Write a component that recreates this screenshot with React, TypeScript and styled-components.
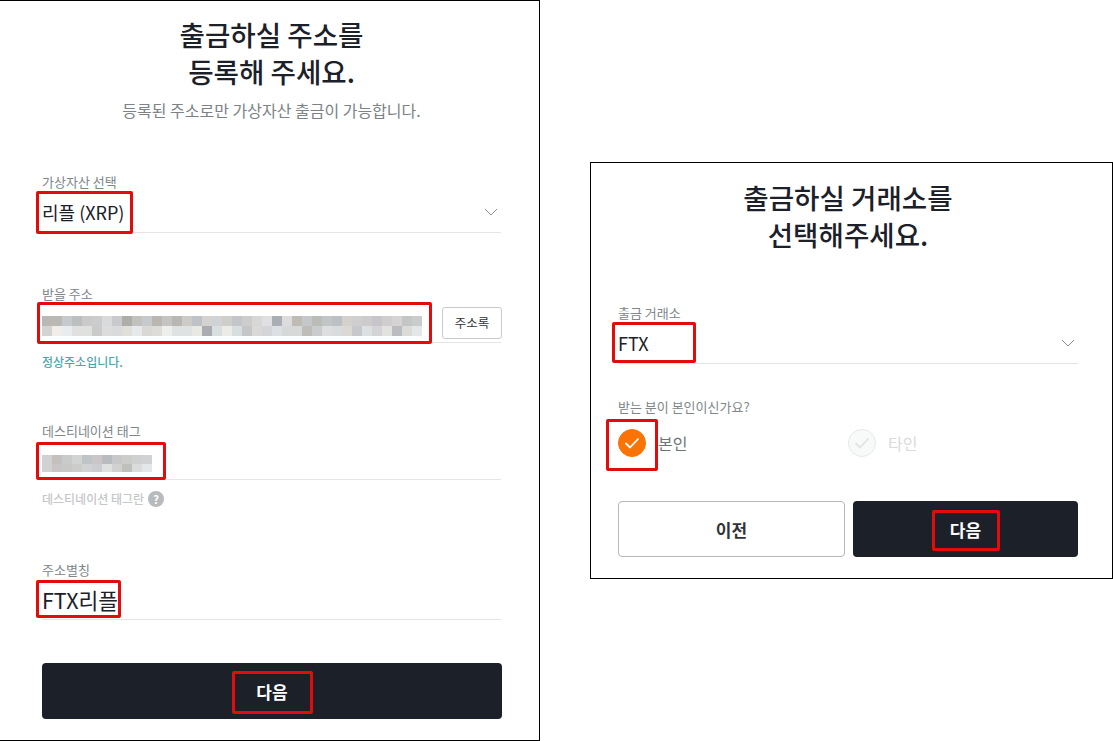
import React from 'react';
import styled, { createGlobalStyle } from 'styled-components';

const GlobalStyle = createGlobalStyle`
  html, body {
    margin: 0;
    padding: 0;
    background: #fff;
  }

  body {
    font-family: 'Noto Sans CJK KR', 'Noto Sans', sans-serif;
    color: #1b2029;
  }

  * {
    box-sizing: border-box;
  }
`;

const Page = styled.div`
  display: flex;
  align-items: flex-start;
  width: 1113px;
  height: 741px;
  overflow: hidden;
`;

const LeftPanel = styled.section`
  width: 540px;
  height: 741px;
  padding: 15px 38px 0 42px;
  border: 1px solid #000;
  border-left-width: 0;
  display: flex;
  flex-direction: column;
`;

const RightPanel = styled.section`
  width: 523px;
  height: 417px;
  margin: 162px 0 0 50px;
  padding: 16px 34px 0 27px;
  border: 1px solid #000;
  display: flex;
  flex-direction: column;
`;

const Title = styled.h1`
  margin: 0;
  font-size: 27.6px;
  line-height: 37px;
  font-weight: 500;
  text-align: center;
  color: #1b2029;
`;

const Subtitle = styled.p`
  margin: 8px 0 0;
  height: 24px;
  font-size: 16px;
  line-height: 24px;
  color: #7c8286;
  text-align: center;
`;

const Field = styled.div<{ $top: number }>`
  position: relative;
  margin-top: ${(p) => p.$top}px;
`;

const Label = styled.label`
  display: block;
  height: 18px;
  font-size: 13px;
  line-height: 18px;
  color: #80868a;
`;

const ValueRow = styled.div<{ $height?: number }>`
  display: flex;
  align-items: center;
  justify-content: space-between;
  height: ${(p) => p.$height ?? 42}px;
  padding-right: 3px;
  border-bottom: 1px solid #e3e5e6;
  font-size: 18px;
  color: #1b2029;
`;

const AliasValue = styled.span`
  font-size: 21.5px;
`;

const Chevron = () => (
  <svg width="14" height="8" viewBox="0 0 14 8" fill="none">
    <polyline points="1,1 7,7 13,1" stroke="#8b8f93" strokeWidth="1" />
  </svg>
);

const AddressBookButton = styled.button`
  width: 60px;
  height: 32px;
  margin-right: -4px;
  padding: 0;
  background: #fff;
  border: 1px solid #c8cacc;
  border-radius: 3px;
  font: inherit;
  font-size: 12.5px;
  color: #30343a;
`;

const Helper = styled.div<{ $color: string }>`
  display: flex;
  align-items: center;
  gap: 4px;
  height: 18px;
  margin-top: 10px;
  font-size: 12px;
  font-weight: 500;
  line-height: 18px;
  color: ${(p) => p.$color};
`;

const HelpBadge = styled.span`
  display: inline-flex;
  align-items: center;
  justify-content: center;
  width: 16px;
  height: 16px;
  border-radius: 50%;
  background: #b8bbbe;
  color: #fff;
  font-size: 11px;
  font-weight: 700;
`;

const Mosaic = styled.div<{ $cols: number; $rowH: number; $shift: number }>`
  display: grid;
  grid-template-columns: repeat(${(p) => p.$cols}, 10px);
  grid-auto-rows: ${(p) => p.$rowH}px;
  margin-top: ${(p) => p.$shift}px;
`;

const PrimaryButton = styled.button<{ $width: number; $top?: number }>`
  flex: none;
  width: ${(p) => p.$width}px;
  height: 56px;
  margin-top: ${(p) => p.$top ?? 0}px;
  padding: 0;
  border: 0;
  border-radius: 4px;
  background: #1b2029;
  color: #fff;
  font: inherit;
  font-size: 17px;
  font-weight: 700;
  position: relative;
`;

const SecondaryButton = styled.button`
  flex: none;
  width: 227px;
  height: 56px;
  padding: 0;
  background: #fff;
  border: 1px solid #b5b7b9;
  border-radius: 4px;
  color: #30343a;
  font: inherit;
  font-size: 17px;
  font-weight: 700;
`;

const Annotation = styled.span<{ $x: number; $y: number; $w: number; $h: number }>`
  position: absolute;
  left: ${(p) => p.$x}px;
  top: ${(p) => p.$y}px;
  width: ${(p) => p.$w}px;
  height: ${(p) => p.$h}px;
  border: 3px solid #e20c0c;
  border-radius: 2px;
  pointer-events: none;
`;

const RadioRow = styled.div`
  position: relative;
  display: flex;
  height: 28px;
  margin-top: 13px;
`;

const RadioOption = styled.div<{ $active?: boolean }>`
  display: flex;
  align-items: center;
  gap: 12px;
  width: 230px;
  font-size: 16px;
  color: ${(p) => (p.$active ? '#6e7377' : '#d9dbdc')};
`;

const RadioDot = styled.span<{ $active?: boolean }>`
  display: inline-flex;
  align-items: center;
  justify-content: center;
  width: 28px;
  height: 28px;
  border-radius: 50%;
  background: ${(p) => (p.$active ? '#f97306' : '#f8f9f9')};
  border: 1px solid ${(p) => (p.$active ? '#f97306' : '#e7e8e9')};
`;

const Check = ({ color }: { color: string }) => (
  <svg width="16" height="12" viewBox="0 0 16 12" fill="none">
    <polyline points="1.5,6 6,10.5 14.5,1.5" stroke={color} strokeWidth="1.8" />
  </svg>
);

const ButtonRow = styled.div`
  display: flex;
  gap: 8px;
  margin-top: 44px;
`;

const addressCells = [
  '#b9b8b4', '#b9b8b4', '#c6cacc', '#bcbec0', '#cbcacb', '#cdcccd', '#d9dadb', '#c8cacd', '#aeada9', '#c2c1bd',
  '#c6cacd', '#b8b7b2', '#c5c4c2', '#b8b7b4', '#cccbc8', '#bec2c6', '#d5d3cf', '#d0d3d5', '#cfcecb', '#c3c5c9',
  '#cdcdce', '#d9d7d5', '#e0e0e2', '#a9aeb4', '#dcdcdc', '#bfbcb6', '#c4c8cb', '#bcbcb6', '#c1c5c7', '#bcc0c2',
  '#d3d0ce', '#d0cecf', '#cdcccd', '#c8c5ca', '#d0cdcf', '#d5d3d4', '#c4c5c5', '#c9cccc',
  '#d3d3d2', '#efeeea', '#e8ecee', '#dfe0df', '#dfe1df', '#cbcacb', '#dcdcdc', '#d8dadc', '#e1dfda', '#e6e9ec',
  '#d9d8d5', '#dcdcd9', '#eeeeec', '#dfe2e3', '#dfe2e2', '#e9e8e2', '#aaacb1', '#d9dee0', '#ecece6', '#d8dde0',
  '#c5c6c8', '#dad9d7', '#d4d5d8', '#dce0e3', '#d7d8d8', '#d7d8d8', '#bebdba', '#c9cbcc', '#dddfdf', '#d8dcdd',
  '#dcd9d5', '#c6c8cc', '#dde0e1', '#d4d3d5', '#e2e3e1', '#babcc0', '#dbdbd8', '#e3e7e8',
];

const tagCells = [
  '#d0d1d2', '#c4c0c0', '#c9cbcb', '#d2d3d3', '#bfc4c9', '#cac6c7', '#b8bcc0', '#c9c8c8', '#cccccb', '#cfd0d1', '#d1d2d3',
  '#d0d1d1', '#c8c5c6', '#c9c8c8', '#cccccb', '#d0d2d3', '#cccdd1', '#dfe0e0', '#d1d1d1', '#bfbfbb', '#dadbdb', '#e4e7e9',
];

const App = () => (
  <>
    <GlobalStyle />
    <Page>
      <LeftPanel>
        <Title>
          출금하실 주소를
          <br />
          등록해 주세요.
        </Title>
        <Subtitle>등록된 주소로만 가상자산 출금이 가능합니다.</Subtitle>

        <Field $top={51}>
          <Label>가상자산 선택</Label>
          <ValueRow>
            <span>리플 (XRP)</span>
            <Chevron />
          </ValueRow>
          <Annotation $x={-6} $y={18} $w={97} $h={43} />
        </Field>

        <Field $top={52}>
          <Label>받을 주소</Label>
          <ValueRow $height={40}>
            <Mosaic $cols={38} $rowH={10} $shift={6}>
              {addressCells.map((c, i) => (
                <i key={i} style={{ background: c }} />
              ))}
            </Mosaic>
            <AddressBookButton>주소록</AddressBookButton>
          </ValueRow>
          <Annotation $x={-5} $y={17} $w={395} $h={42} />
          <Helper $color="#4fa5ae">정상주소입니다.</Helper>
        </Field>

        <Field $top={51}>
          <Label>데스티네이션 태그</Label>
          <ValueRow $height={40}>
            <Mosaic $cols={11} $rowH={8.5} $shift={8}>
              {tagCells.map((c, i) => (
                <i key={i} style={{ background: c }} />
              ))}
            </Mosaic>
          </ValueRow>
          <Annotation $x={-6} $y={20} $w={130} $h={38} />
          <Helper $color="#c5c7c9">
            데스티네이션 태그란
            <HelpBadge>?</HelpBadge>
          </Helper>
        </Field>

        <Field $top={53}>
          <Label>주소별칭</Label>
          <ValueRow $height={41}>
            <AliasValue>FTX리플</AliasValue>
          </ValueRow>
          <Annotation $x={-6} $y={19} $w={85} $h={38} />
        </Field>

        <PrimaryButton $width={460} $top={43}>
          다음
          <Annotation $x={190} $y={8} $w={81} $h={43} />
        </PrimaryButton>
      </LeftPanel>

      <RightPanel>
        <Title>
          출금하실 거래소를
          <br />
          선택해주세요.
        </Title>

        <Field $top={51}>
          <Label>출금 거래소</Label>
          <ValueRow>
            <span>FTX</span>
            <Chevron />
          </ValueRow>
          <Annotation $x={-6} $y={18} $w={84} $h={41} />
        </Field>

        <Field $top={34}>
          <Label>받는 분이 본인이신가요?</Label>
          <RadioRow>
            <RadioOption $active>
              <RadioDot $active>
                <Check color="#fff" />
              </RadioDot>
              본인
            </RadioOption>
            <RadioOption>
              <RadioDot>
                <Check color="#e0e2e3" />
              </RadioDot>
              타인
            </RadioOption>
            <Annotation $x={-12} $y={-10} $w={52} $h={52} />
          </RadioRow>
        </Field>

        <ButtonRow>
          <SecondaryButton>이전</SecondaryButton>
          <PrimaryButton $width={225}>
            다음
            <Annotation $x={79} $y={9} $w={68} $h={41} />
          </PrimaryButton>
        </ButtonRow>
      </RightPanel>
    </Page>
  </>
);

export default App;
